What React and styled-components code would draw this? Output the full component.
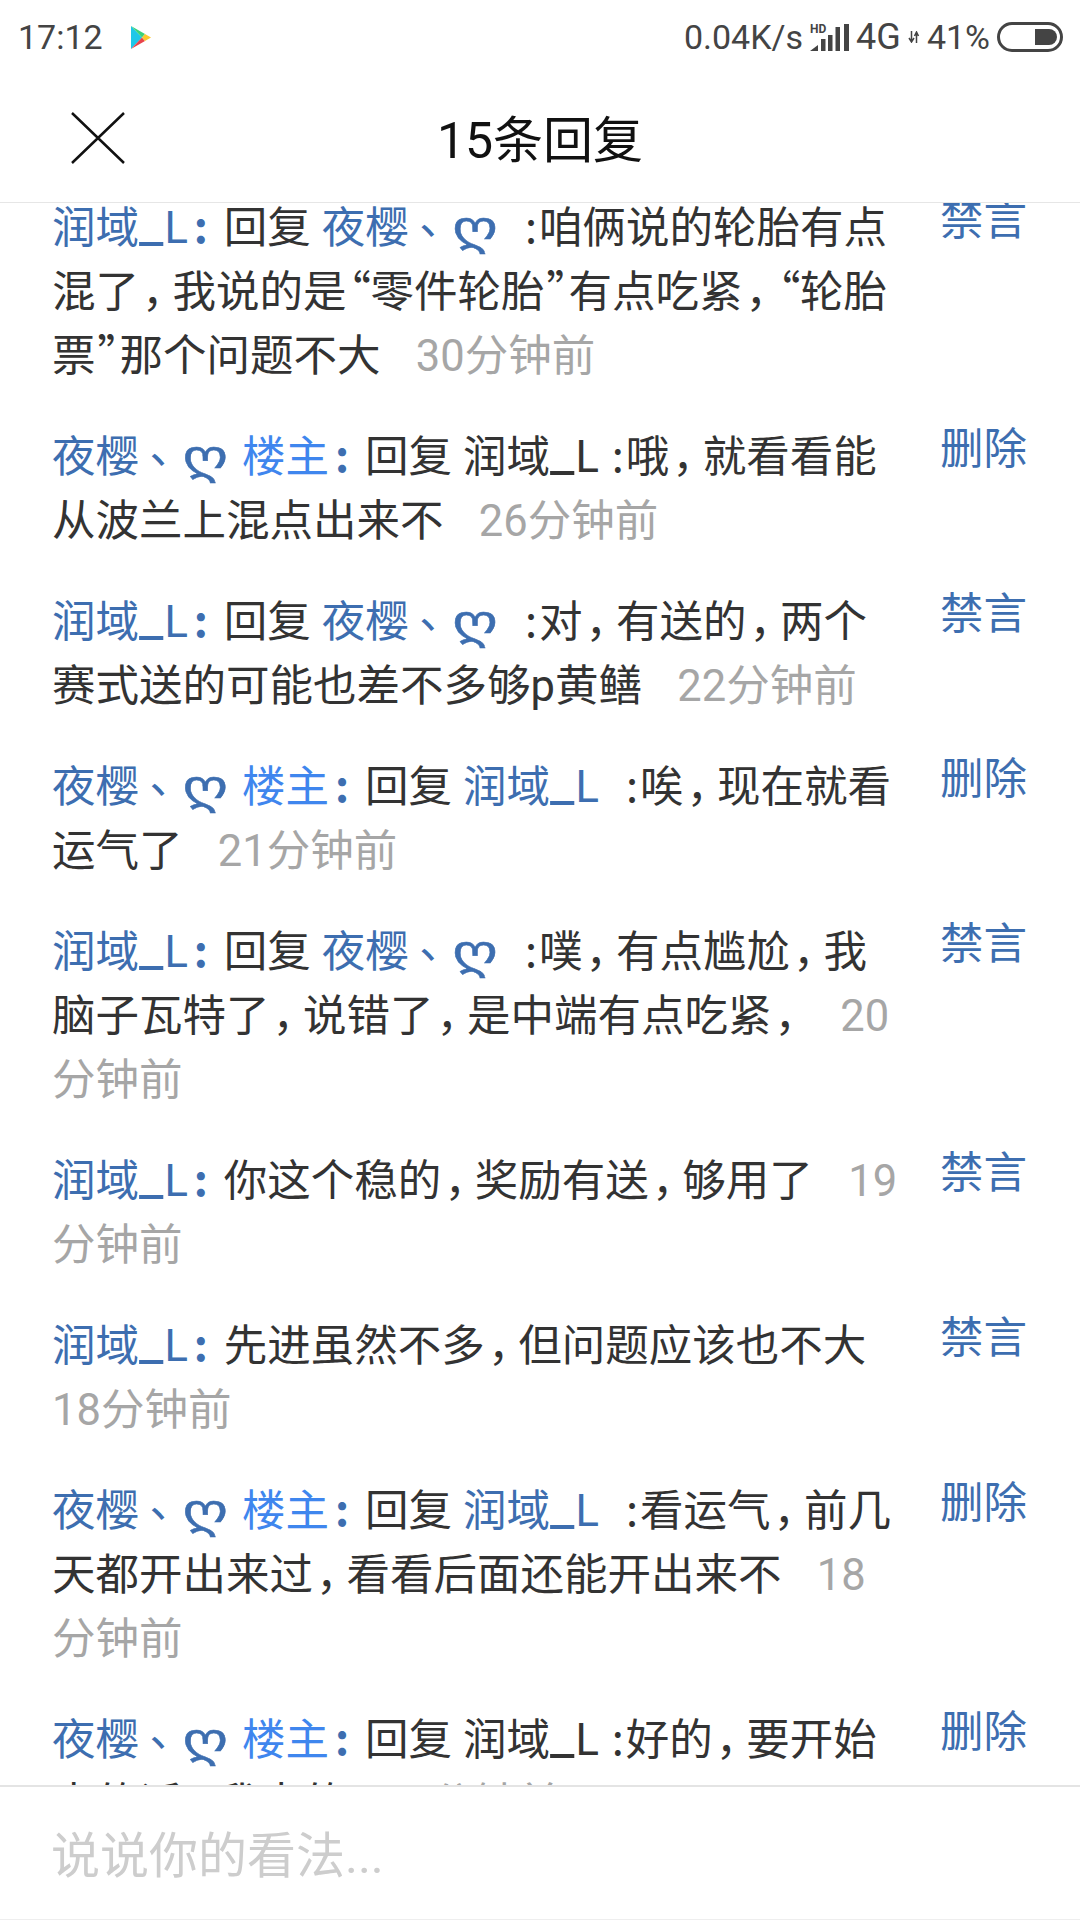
import React from "react";
import styled, { createGlobalStyle } from "styled-components";

const blue = "#3d6eb0";
const owner = "#3f86ee";
const dark = "#333";
const grey = "#a6a6a6";

const GlobalStyle = createGlobalStyle`
  html, body {
    margin: 0;
    padding: 0;
    background: #fff;
  }
  body {
    font-family: Roboto, "Noto Sans CJK SC", sans-serif;
  }
`;

const Page = styled.div`
  width: 1080px;
  height: 1920px;
  display: flex;
  flex-direction: column;
  overflow: hidden;
  background: #fff;
`;

const StatusBar = styled.div`
  height: 70px;
  flex: none;
  display: flex;
  align-items: center;
  justify-content: space-between;
  padding: 4px 17px 0 18px;
  box-sizing: border-box;
  color: #444;
  font-size: 34px;
`;

const StatusGroup = styled.div`
  display: flex;
  align-items: center;
  gap: ${(p) => p.$gap || 0}px;
`;

const Network = styled.span`
  font-size: 36px;
`;

const Header = styled.header`
  height: 133px;
  flex: none;
  box-sizing: border-box;
  border-bottom: 1px solid #e6e6e6;
  display: flex;
  align-items: center;
  justify-content: center;
  position: relative;
`;

const Close = styled.svg`
  position: absolute;
  left: 71px;
  top: 42px;
`;

const Title = styled.h1`
  margin: 0;
  font-size: 50px;
  font-weight: 400;
  color: #111;
`;

const List = styled.main`
  flex: 1;
  min-height: 0;
  overflow: hidden;
`;

const Scroller = styled.div`
  margin-top: -6px;
  display: flex;
  flex-direction: column;
  gap: 37px;
  padding: 0 53px 0 52px;
`;

const Row = styled.article`
  display: flex;
  justify-content: space-between;
  align-items: flex-start;
`;

const Body = styled.p`
  margin: 0;
  width: 855px;
  font-size: 43.5px;
  line-height: 64px;
  color: ${dark};
  white-space: pre-wrap;
`;

const Name = styled.span`
  color: ${blue};
`;

const Under = styled.span`
  font-size: 54px;
  line-height: 0;
  letter-spacing: 1px;
  vertical-align: 1px;
`;

const Owner = styled.span`
  color: ${owner};
  margin-left: 14px;
`;

// punctuation sits in a cell of its own in the reference's font
const Punct = styled.span`
  display: inline-block;
  width: ${(p) => p.$width || "33.5px"};
  line-height: 1;
  text-align: ${(p) => p.$align || "center"};
  font-family: "Noto Sans CJK SC", sans-serif;
  font-feature-settings: "palt";
`;

const NameColon = styled(Punct)`
  width: 36px;
  box-sizing: border-box;
  padding-right: 10px;
  font-weight: 700;
`;

const Dun = styled(Punct)`
  width: 1em;
  transform: translateY(-9px);
`;

const Curl = styled.span`
  display: inline-block;
  font-family: "DejaVu Sans", sans-serif;
  font-size: 58px;
  line-height: 0;
  vertical-align: -4px;
  transform: scaleY(0.78);
  -webkit-text-stroke: 0.6px ${blue};
`;

const Reply = styled.span`
  margin-right: 11px;
`;

const Gap = styled.span`
  display: inline-block;
  width: 25px;
`;

const Time = styled.span`
  color: ${grey};
  word-spacing: 1px;
`;

const Action = styled.button`
  flex: none;
  border: 0;
  padding: 0;
  margin: -8px 0 0;
  background: none;
  font: inherit;
  font-size: 43.5px;
  line-height: 64px;
  color: ${blue};
`;

const Footer = styled.footer`
  height: 135px;
  flex: none;
  box-sizing: border-box;
  border-top: 2px solid #e4e4e4;
  border-bottom: 1px solid #eee;
  background: #fff;
  display: flex;
  align-items: center;
  padding: 0 51px 4px;
  font-size: 49px;
  color: #cdcdcd;
`;

const PlayIcon = () => (
  <svg width="20" height="23" viewBox="0 0 20 23">
    <path d="M0 0v23l11-11.500z" fill="#1fc7e8" />
    <path d="M0 0l14 8-3 3.500z" fill="#3ad27a" />
    <path d="M0 23l14-8-3-3.500z" fill="#e8434b" />
    <path d="M14 8l6 3.500-6 3.500-3-3.500z" fill="#fbc92e" />
  </svg>
);

const SignalIcon = () => (
  <svg width="39" height="27" viewBox="0 0 39 27">
    <text x="0" y="9" fontSize="12" fontWeight="700" fontFamily="Roboto, sans-serif" fill="#444">HD</text>
    <path d="M0 27l8-6v6zM11 15h4.500v12H11zM18 11h4.500v16H18zM25.500 3h4.500v24h-4.500zM34 0h5v27h-5z" fill="#444" />
  </svg>
);

const ArrowsIcon = () => (
  <svg width="12" height="12" viewBox="0 0 12 12">
    <path d="M3.500 0v10M1 7l2.500 4L6 7M8.500 12V2M6.500 5l2-4 2 4" fill="none" stroke="#444" strokeWidth="1.500" />
  </svg>
);

const BatteryIcon = () => (
  <svg width="66" height="30" viewBox="0 0 66 30">
    <rect x="1.500" y="1.500" width="63" height="27" rx="13.500" fill="none" stroke="#444" strokeWidth="3" />
    <path d="M38 7h14a8 8 0 0 1 0 16H38z" fill="#444" />
  </svg>
);

const Nick = () => (
  <Name>
    夜樱<Dun>、</Dun>
    <Curl>ღ</Curl>
  </Name>
);

const Handle = () => (
  <>
    润域<Under>_</Under>L
  </>
);

const Run = () => (
  <Name>
    <Handle />
  </Name>
);

const punctStyle = {
  "，": { width: "33.5px" },
  "“": { width: "24px", align: "right" },
  "”": { width: "24px", align: "right" },
  ":": { width: "16px" },
};

const Content = ({ text }) =>
  text.split(/([，“”:])/).map((part, i) =>
    punctStyle[part] ? (
      <Punct key={i} $width={punctStyle[part].width} $align={punctStyle[part].align}>
        {part}
      </Punct>
    ) : (
      <React.Fragment key={i}>{part}</React.Fragment>
    )
  );

const rows = [
  { who: "run", to: "nick", gap: true, text: ":咱俩说的轮胎有点混了，我说的是“零件轮胎”有点吃紧，“轮胎票”那个问题不大", time: "30分钟前" },
  { who: "nick", to: "plain", text: ":哦，就看看能从波兰上混点出来不", time: "26分钟前" },
  { who: "run", to: "nick", gap: true, text: ":对，有送的，两个赛式送的可能也差不多够p黄鳝", time: "22分钟前" },
  { who: "nick", to: "run", gap: true, text: ":唉，现在就看运气了", time: "21分钟前" },
  { who: "run", to: "nick", gap: true, text: ":噗，有点尴尬，我脑子瓦特了，说错了，是中端有点吃紧，", time: "20分钟前" },
  { who: "run", text: "你这个稳的，奖励有送，够用了", time: "19分钟前" },
  { who: "run", text: "先进虽然不多，但问题应该也不大", time: "18分钟前" },
  { who: "nick", to: "run", gap: true, text: ":看运气，前几天都开出来过，看看后面还能开出来不", time: "18分钟前" },
  { who: "nick", to: "plain", text: ":好的，要开始来的话，我来的", time: "16分钟前" },
];

function Comment({ row }) {
  const isNick = row.who === "nick";
  return (
    <Row>
      <Body>
        {isNick ? <Nick /> : <Run />}
        {isNick && <Owner>楼主</Owner>}
        <Name>
          <NameColon>:</NameColon>
        </Name>
        {row.to && <Reply>回复</Reply>}
        {row.to === "nick" && <Nick />}
        {row.to === "run" && <Run />}
        {row.to === "plain" && (
          <>
            <Handle />{" "}
          </>
        )}
        {row.gap && <Gap />}
        <Content text={row.text} />
        <Time>{"   " + row.time}</Time>
      </Body>
      <Action>{isNick ? "删除" : "禁言"}</Action>
    </Row>
  );
}

export default function App() {
  return (
    <Page>
      <GlobalStyle />
      <StatusBar>
        <StatusGroup $gap={28}>
          <span>17:12</span>
          <PlayIcon />
        </StatusGroup>
        <StatusGroup $gap={7}>
          <span>0.04K/s</span>
          <SignalIcon />
          <Network>4G</Network>
          <ArrowsIcon />
          <span>41%</span>
          <BatteryIcon />
        </StatusGroup>
      </StatusBar>
      <Header>
        <Close width="54" height="52" viewBox="0 0 54 52">
          <path d="M1 1l52 50M53 1L1 51" stroke="#111" strokeWidth="2.500" fill="none" />
        </Close>
        <Title>15条回复</Title>
      </Header>
      <List>
        <Scroller>
          {rows.map((row, i) => (
            <Comment key={i} row={row} />
          ))}
        </Scroller>
      </List>
      <Footer>说说你的看法...</Footer>
    </Page>
  );
}
